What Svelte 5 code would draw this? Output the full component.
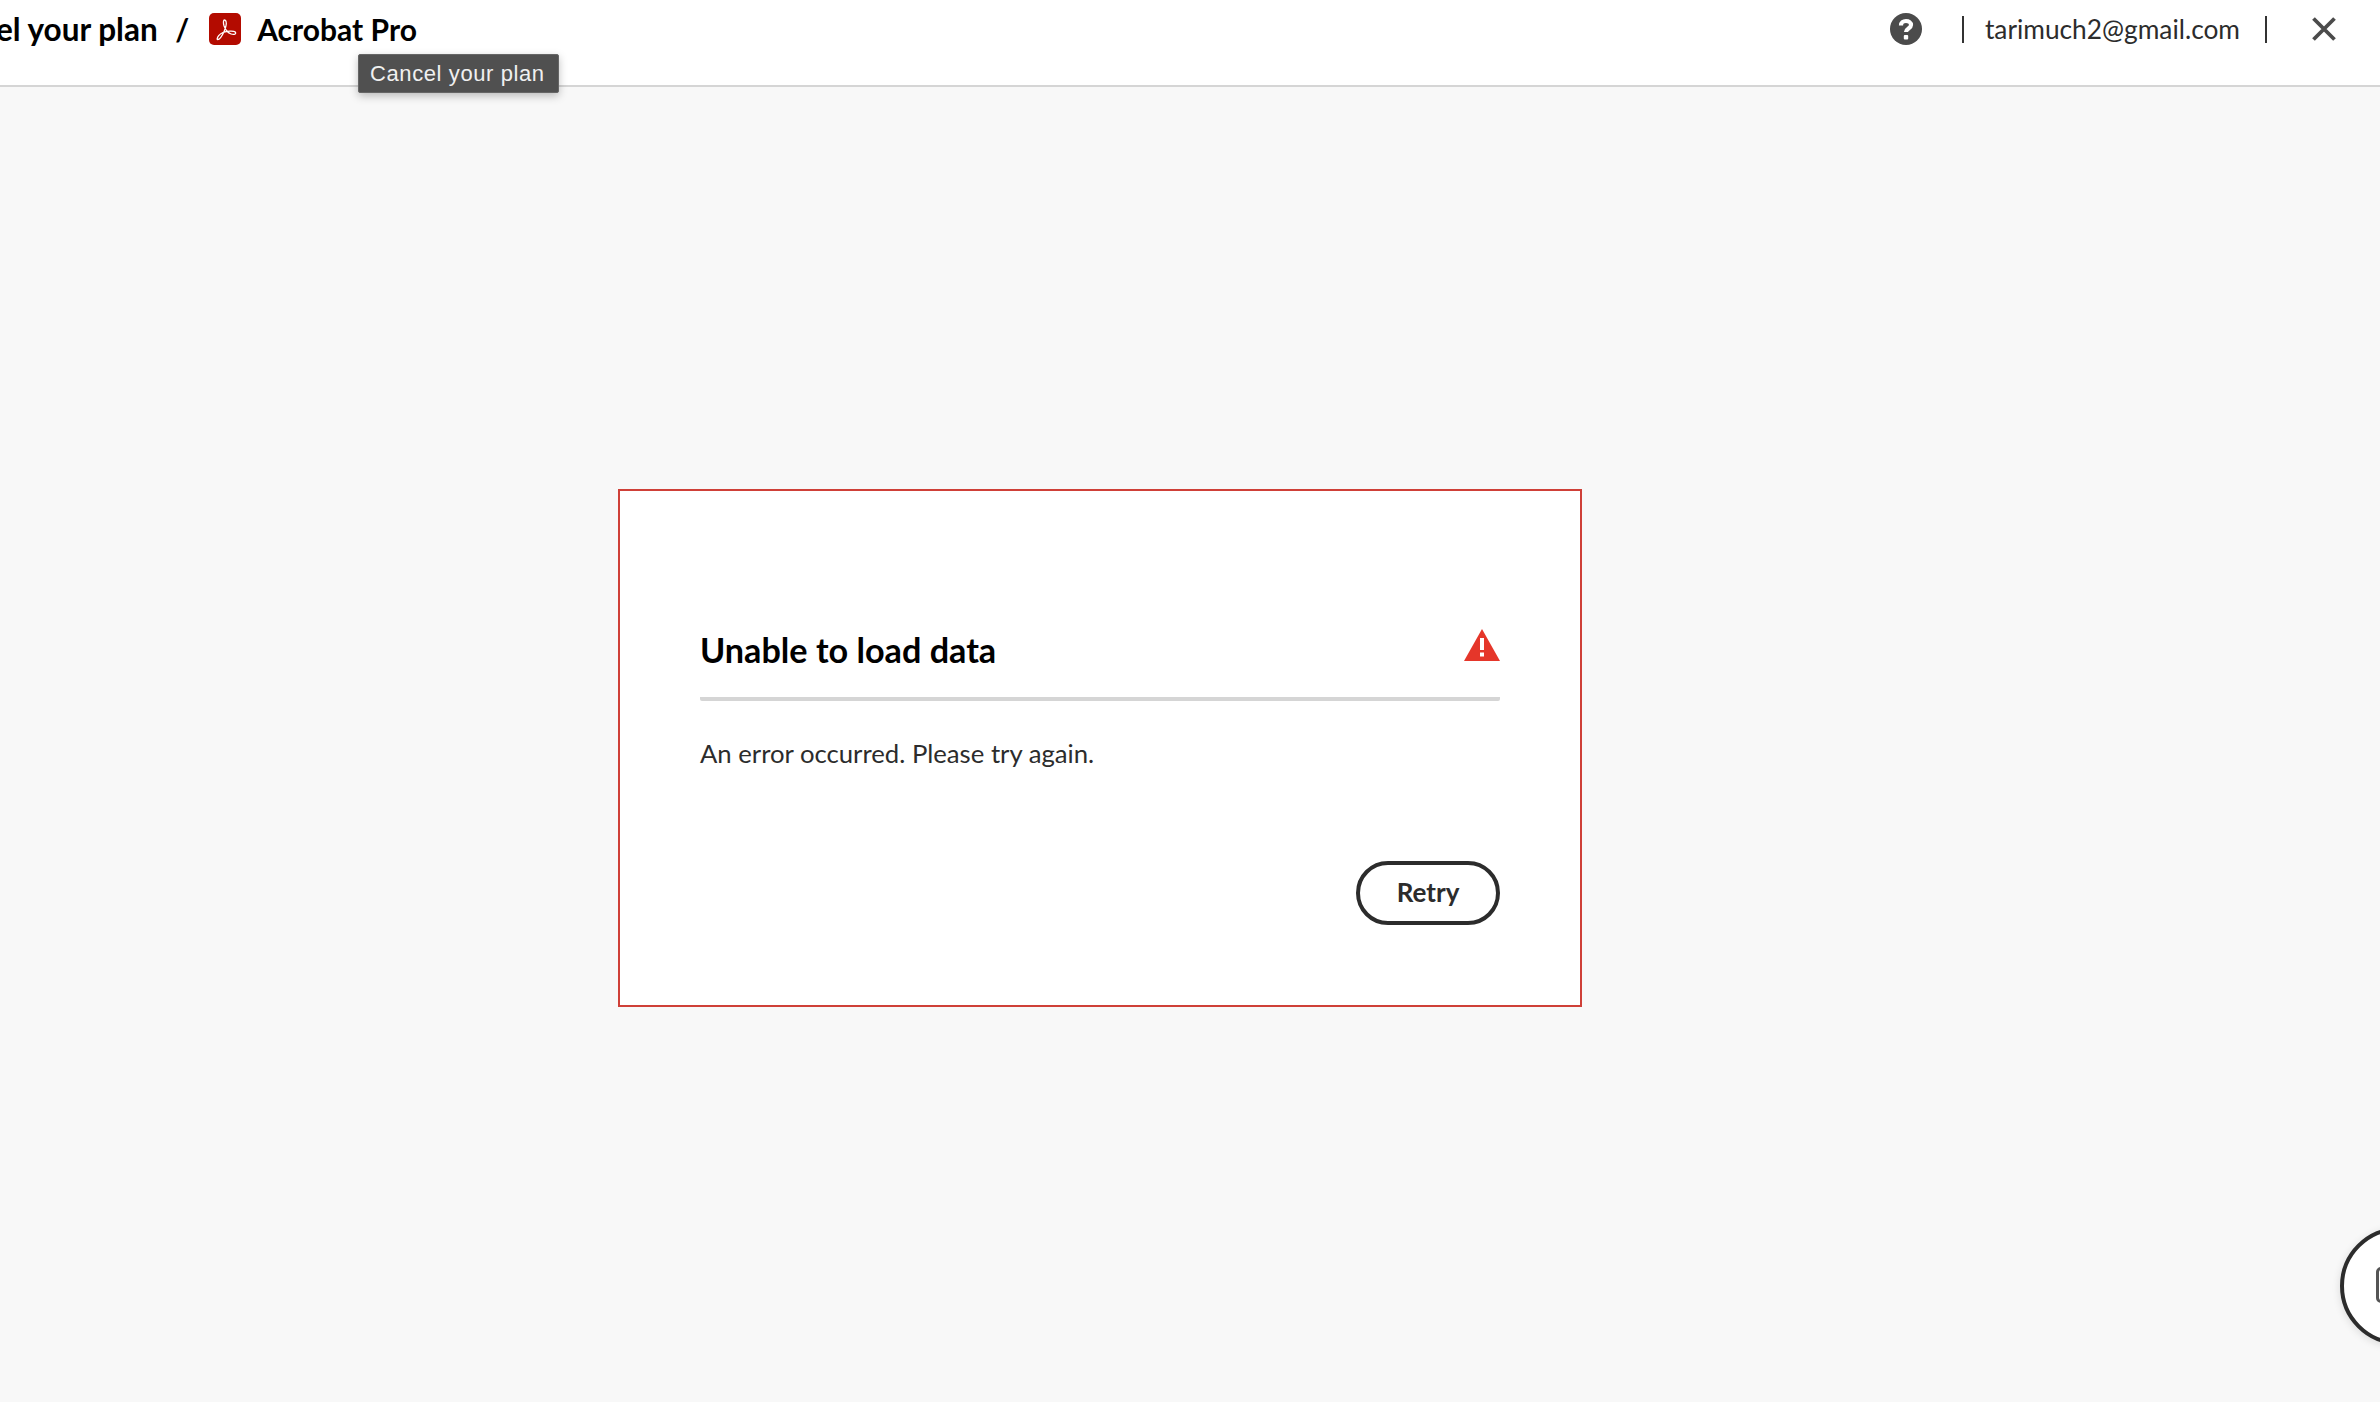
<script lang="ts">
	const email = 'tarimuch2@gmail.com';
</script>

<header class="topbar">
	<nav class="crumbs">
		<span class="crumb parent">Cancel your plan</span>
		<span class="slash">/</span>
		<svg class="pdf-logo" viewBox="0 0 32 32" aria-hidden="true">
			<rect width="32" height="32" rx="5" fill="#b30b00" />
			<path
				d="M15.6 7c-1.4 0-1.5 3-.5 6 1.5 4 4 7 7 8 2.5.8 4.6.3 4.6-1 0-1.5-3-2-6-1.8-4 .3-9 2-11 4.5-1.5 2-2 3.8-1 3.8 2 0 4.5-3.8 6.5-8.300 1.500-3.500 2.500-6 2-9-.2-1.500-1-2.200-1.600-2.200z"
				fill="none"
				stroke="#fff"
				stroke-width="1.3"
			/>
		</svg>
		<span class="crumb">Acrobat Pro</span>
		<div class="tooltip">Cancel your plan</div>
	</nav>

	<div class="account">
		<svg class="help" viewBox="0 0 32 32" aria-hidden="true">
			<circle cx="16" cy="16" r="16" fill="#4b4b4b" />
			<path d="M11 12.500c0-3 2.200-4.500 5-4.500s5 1.500 5 4c0 3.500-5 3.500-5 7" fill="none" stroke="#fff" stroke-width="4.200" />
			<rect x="13.800" y="22" width="4.400" height="4.400" rx="1" fill="#fff" />
		</svg>
		<span class="sep"></span>
		<span class="email">{email}</span>
		<span class="sep"></span>
		<svg class="close" viewBox="0 0 24 24" aria-hidden="true">
			<path d="M1.500 1.500l21 21M22.500 1.500l-21 21" fill="none" stroke="#4b4b4b" stroke-width="3.800" />
		</svg>
	</div>
</header>

<main class="page">
	<section class="card">
		<div class="card-head">
			<h1>Unable to load data</h1>
			<svg class="warn" viewBox="0 0 36 32" aria-hidden="true">
				<path d="M18 0L36 32H0z" fill="#e5362a" />
				<rect x="16" y="9" width="4" height="12" fill="#fff" />
				<rect x="16" y="23.500" width="4" height="4" fill="#fff" />
			</svg>
		</div>
		<p>An error occurred. Please try again.</p>
		<div class="actions">
			<button type="button">Retry</button>
		</div>
	</section>
</main>

<div class="chat-fab">
	<span class="chat-glyph"></span>
</div>

<style>
	:global(body) {
		background: #f8f8f8;
		overflow: hidden;
		font-family: 'Lato', 'Open Sans', sans-serif;
		color: #000;
	}

	.topbar {
		display: flex;
		align-items: center;
		justify-content: space-between;
		height: 85px;
		padding: 0 44px 0 0;
		background: #fff;
		border-bottom: 2px solid #d5d5d5;
		margin-bottom: 402px;
	}

	.crumbs {
		position: relative;
		display: flex;
		align-items: center;
		margin-left: -73.5px;
		padding-bottom: 27px;
	}

	.crumb {
		font-size: 30px;
		font-weight: 700;
		white-space: nowrap;
	}

	.parent {
		font-size: 31.5px;
	}

	.slash {
		margin: 0 20px 0 17.5px;
		font-size: 30px;
		font-weight: 700;
	}

	.pdf-logo {
		width: 32px;
		height: 32px;
		margin-right: 16px;
	}

	.tooltip {
		position: absolute;
		top: 44px;
		left: 431.5px;
		width: 201px;
		height: 39px;
		box-sizing: border-box;
		padding: 0 11px;
		background: #505050;
		border: 1px solid #666;
		border-radius: 2px;
		box-shadow: 0 3px 8px rgba(0, 0, 0, 0.25);
		color: #f0f0f0;
		font-family: 'Liberation Sans', sans-serif;
		font-size: 22px;
		letter-spacing: 0.6px;
		line-height: 37px;
		white-space: nowrap;
	}

	.account {
		display: flex;
		align-items: center;
		padding-bottom: 27px;
	}

	.help {
		width: 32px;
		height: 32px;
		margin-right: 40px;
	}

	.sep {
		width: 2px;
		height: 27px;
		background: #333;
	}

	.email {
		margin: 0 25px 0 21px;
		font-size: 26.3px;
		color: #2c2c2c;
		white-space: nowrap;
	}

	.close {
		width: 24px;
		height: 24px;
		margin-left: 45px;
	}

	.page {
		display: flex;
		justify-content: center;
		padding-right: 180px;
	}

	.card {
		box-sizing: border-box;
		width: 964px;
		height: 518px;
		padding: 130px 80px 0;
		background: #fff;
		border: 2px solid #cf4038;
	}

	.card-head {
		display: flex;
		align-items: flex-start;
		justify-content: space-between;
		height: 76px;
		border-bottom: 4px solid #d5d5d5;
		border-radius: 0 0 2px 2px;
	}

	h1 {
		margin: 0;
		padding-top: 7px;
		font-size: 34.2px;
		font-weight: 700;
		line-height: 44px;
	}

	.warn {
		width: 36px;
		height: 32px;
		margin-top: 8px;
	}

	p {
		margin: 35px 0 0;
		font-size: 25.7px;
		line-height: 34px;
		color: #2c2c2c;
	}

	.actions {
		display: flex;
		justify-content: flex-end;
		margin-top: 91px;
	}

	button {
		width: 144px;
		height: 64px;
		padding: 0 0 3px;
		background: #fff;
		border: 4px solid #2c2c2c;
		border-radius: 32px;
		color: #2c2c2c;
		font: 700 26px 'Lato', 'Open Sans', sans-serif;
	}

	.chat-fab {
		position: fixed;
		left: 2340px;
		top: 1227px;
		box-sizing: border-box;
		width: 118px;
		height: 118px;
		background: #fff;
		border: 4px solid #2c2c2c;
		border-radius: 50%;
		box-shadow: 0 2px 8px rgba(0, 0, 0, 0.12);
	}

	.chat-glyph {
		position: absolute;
		left: 32px;
		top: 36px;
		width: 26px;
		height: 30px;
		border: 3px solid #555;
		border-radius: 5px;
	}
</style>
